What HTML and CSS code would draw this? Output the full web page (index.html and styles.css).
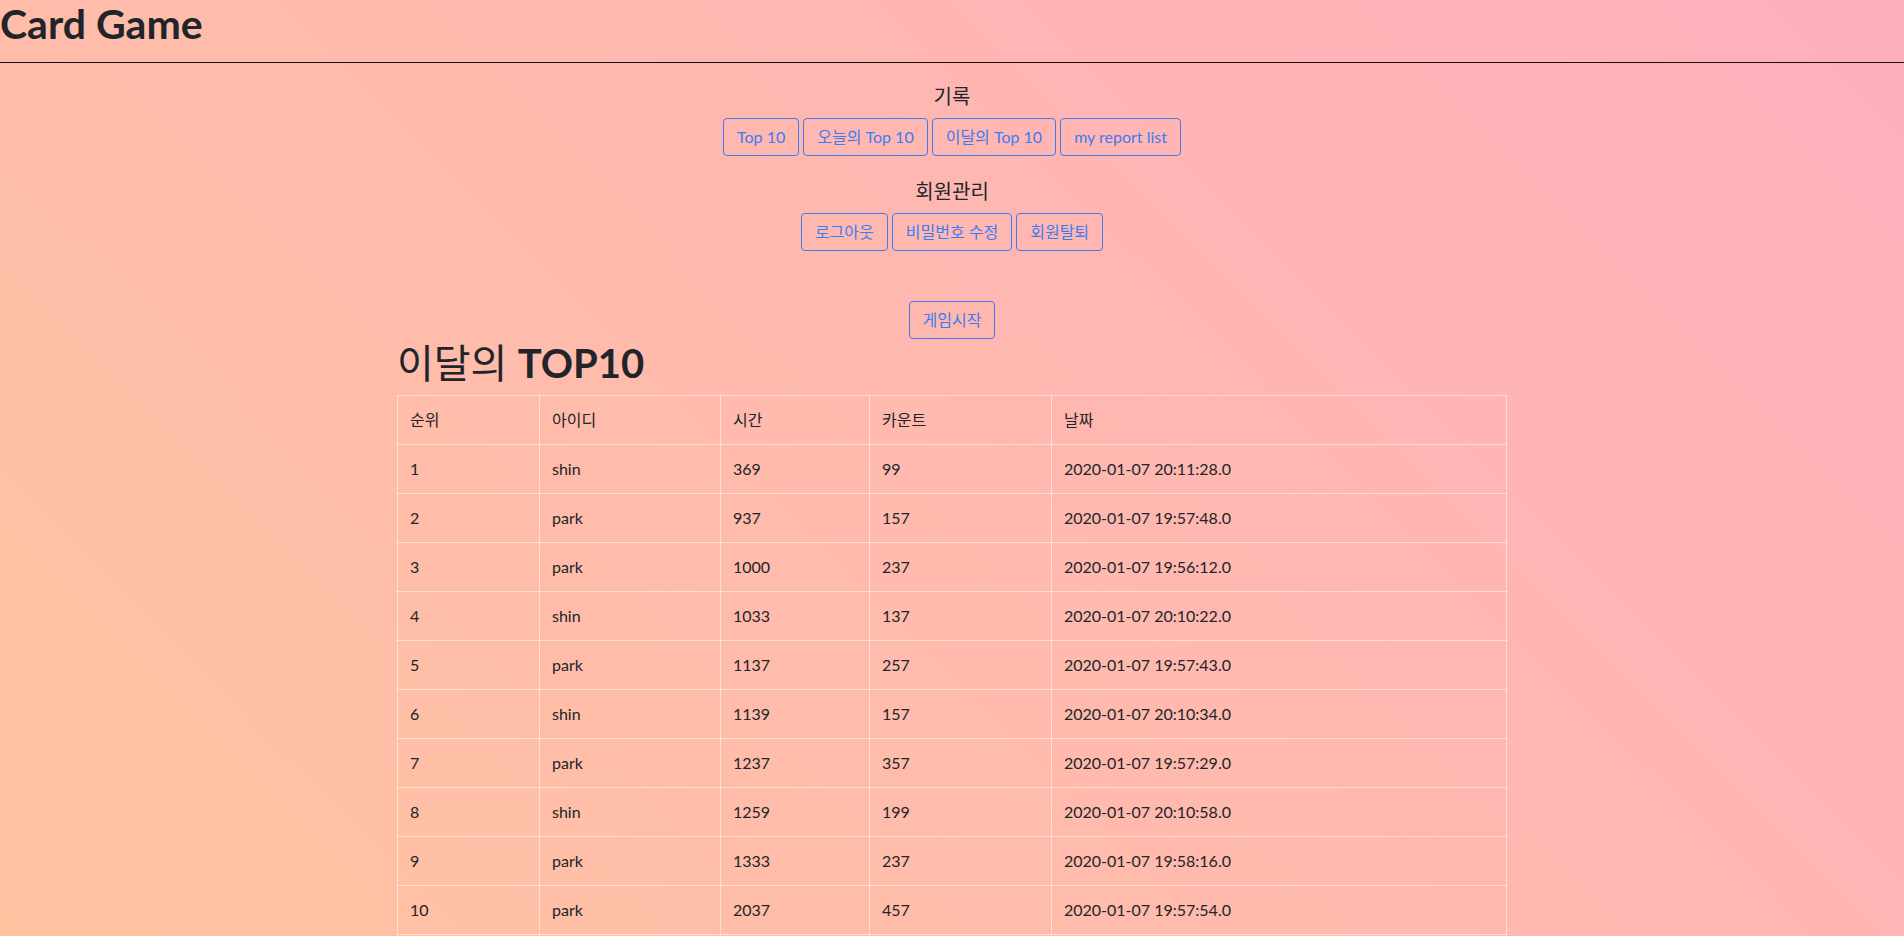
FILE: index.html
```html
<!DOCTYPE html>
<html lang="ko">
<head>
<meta charset="utf-8">
<title>Card Game</title>
<link rel="stylesheet" href="styles.css">
</head>
<body>
<header class="topbar">
  <h1 class="brand">Card Game</h1>
</header>
<nav class="menu">
  <section class="menu-group">
    <h5 class="menu-title">기록</h5>
    <div class="btn-row">
      <button class="btn">Top 10</button>
      <button class="btn">오늘의 Top 10</button>
      <button class="btn">이달의 Top 10</button>
      <button class="btn">my report list</button>
    </div>
  </section>
  <section class="menu-group">
    <h5 class="menu-title">회원관리</h5>
    <div class="btn-row">
      <button class="btn">로그아웃</button>
      <button class="btn">비밀번호 수정</button>
      <button class="btn">회원탈퇴</button>
    </div>
  </section>
  <div class="start-row">
    <button class="btn">게임시작</button>
  </div>
</nav>
<main class="container">
  <h1 class="board-title">이달의 <b>TOP10</b></h1>
  <table class="rank-table">
    <thead>
      <tr>
        <th class="c-rank">순위</th>
        <th class="c-id">아이디</th>
        <th class="c-time">시간</th>
        <th class="c-count">카운트</th>
        <th class="c-date">날짜</th>
      </tr>
    </thead>
    <tbody>
      <tr><td>1</td><td>shin</td><td>369</td><td>99</td><td>2020-01-07 20:11:28.0</td></tr>
      <tr><td>2</td><td>park</td><td>937</td><td>157</td><td>2020-01-07 19:57:48.0</td></tr>
      <tr><td>3</td><td>park</td><td>1000</td><td>237</td><td>2020-01-07 19:56:12.0</td></tr>
      <tr><td>4</td><td>shin</td><td>1033</td><td>137</td><td>2020-01-07 20:10:22.0</td></tr>
      <tr><td>5</td><td>park</td><td>1137</td><td>257</td><td>2020-01-07 19:57:43.0</td></tr>
      <tr><td>6</td><td>shin</td><td>1139</td><td>157</td><td>2020-01-07 20:10:34.0</td></tr>
      <tr><td>7</td><td>park</td><td>1237</td><td>357</td><td>2020-01-07 19:57:29.0</td></tr>
      <tr><td>8</td><td>shin</td><td>1259</td><td>199</td><td>2020-01-07 20:10:58.0</td></tr>
      <tr><td>9</td><td>park</td><td>1333</td><td>237</td><td>2020-01-07 19:58:16.0</td></tr>
      <tr><td>10</td><td>park</td><td>2037</td><td>457</td><td>2020-01-07 19:57:54.0</td></tr>
    </tbody>
  </table>
</main>
</body>
</html>
```
FILE: styles.css
```css
html {
  min-height: 100%;
  background: linear-gradient(45deg, #ffc3a0 0%, #ffafbd 100%) fixed;
}
body {
  margin: 0;
  font-family: Lato, "Noto Sans CJK KR", sans-serif;
  font-size: 16px;
  line-height: 1.5;
  color: #212529;
}
.topbar {
  height: 62px;
  border-bottom: 1px solid #111;
}
.brand {
  margin: 0;
  font-size: 41px;
  font-weight: 700;
  line-height: 48px;
}
.menu {
  display: flex;
  flex-direction: column;
  align-items: center;
  padding-top: 21px;
}
.menu-group + .menu-group {
  margin-top: 23px;
}
.menu-title {
  margin: 0 0 10px;
  font-size: 20px;
  font-weight: 400;
  line-height: 24px;
  text-align: center;
}
.btn-row {
  display: flex;
  justify-content: center;
  gap: 4px;
}
.btn {
  font-family: inherit;
  font-size: 16px;
  line-height: 24px;
  padding: 6px 13px;
  border: 1px solid #3d7cf0;
  border-radius: 4px;
  background: transparent;
  color: #3d7cf0;
  cursor: pointer;
}
.start-row {
  margin-top: 50px;
}
.container {
  width: 1110px;
  margin: 0 auto 16px;
}
.board-title {
  margin: 0 0 8px;
  font-size: 40px;
  font-weight: 400;
  line-height: 48px;
}
.board-title b {
  font-weight: 700;
}
.rank-table {
  width: 100%;
  border-collapse: collapse;
  table-layout: fixed;
}
.rank-table th,
.rank-table td {
  box-sizing: border-box;
  padding: 12px;
  border: 1px solid rgba(255, 255, 255, 0.5);
  text-align: left;
  font-weight: 400;
  line-height: 24px;
  vertical-align: top;
}
.c-rank { width: 142px; }
.c-id { width: 181px; }
.c-time { width: 149px; }
.c-count { width: 182px; }
```
